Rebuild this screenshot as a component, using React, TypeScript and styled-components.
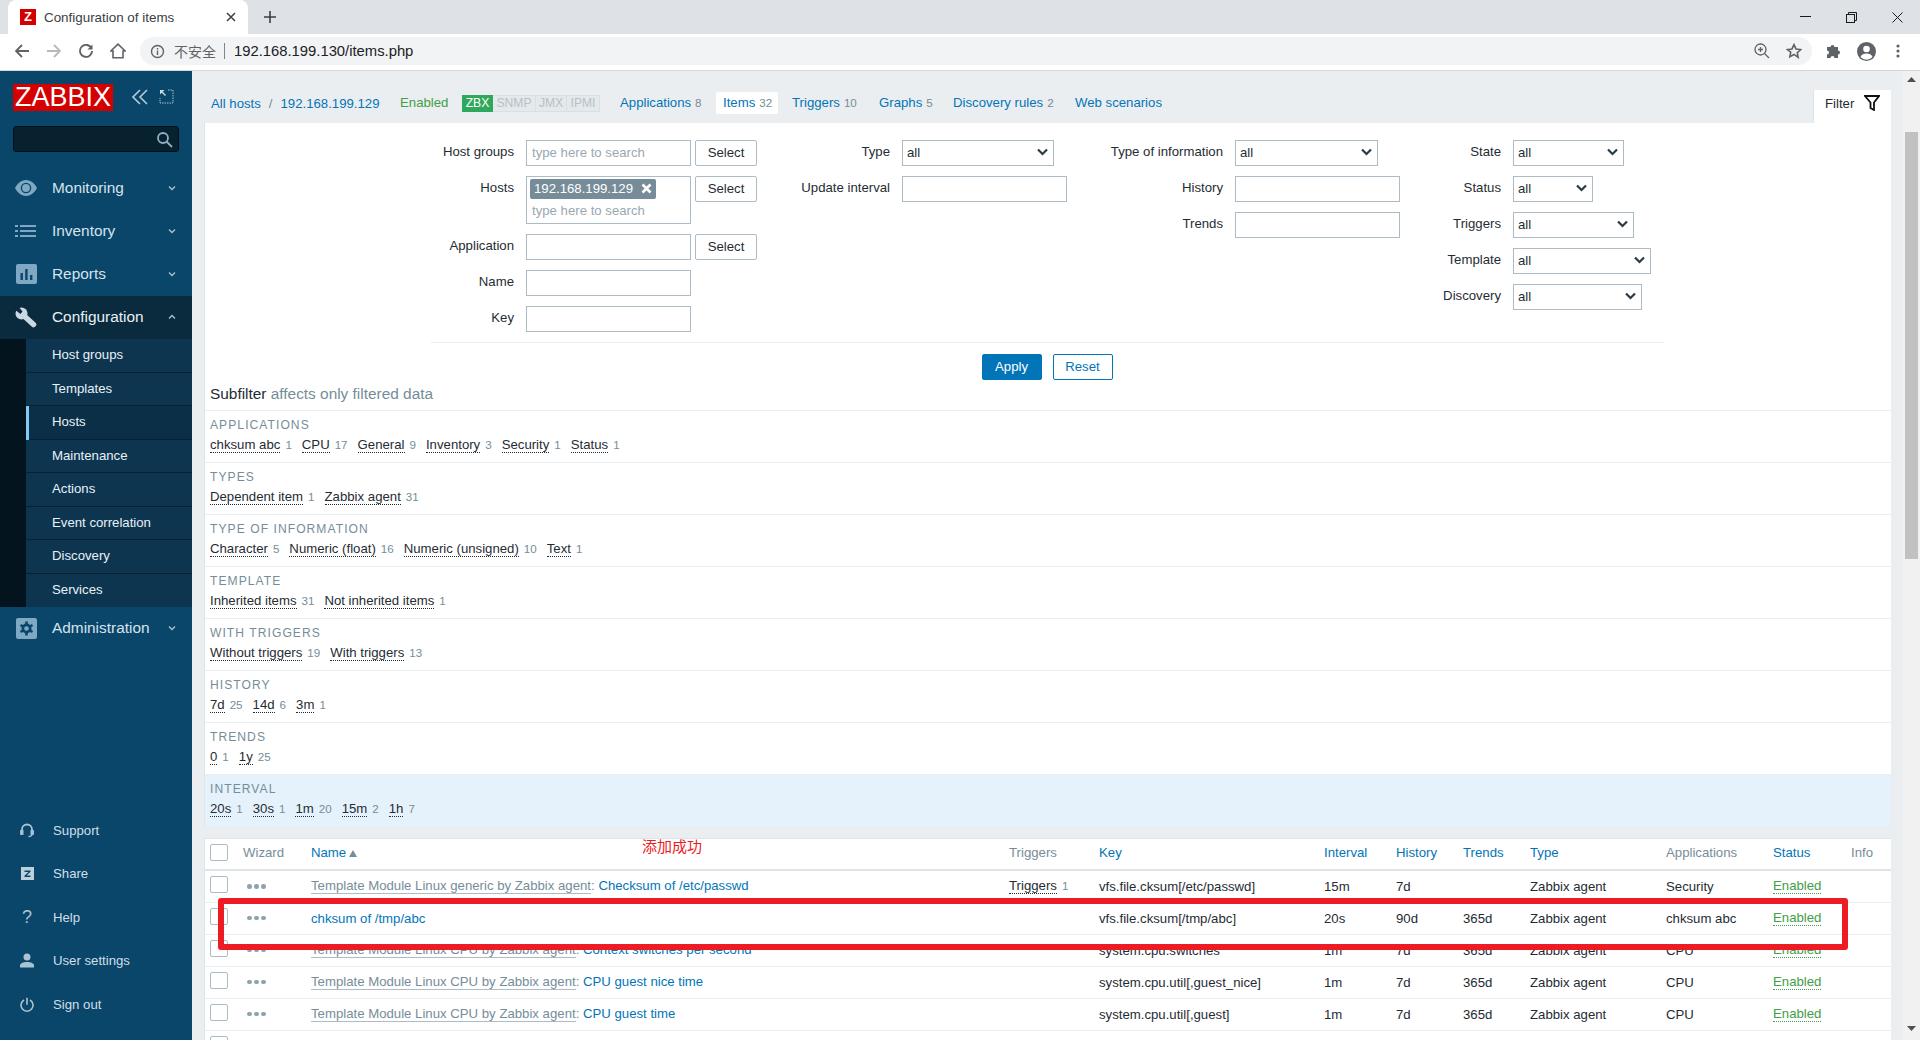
import React from 'react';
import styled, { createGlobalStyle } from 'styled-components';

const Global = createGlobalStyle`
  html, body { margin: 0; padding: 0; height: 100%; overflow: hidden; }
  body { font-family: "Liberation Sans", Arial, sans-serif; font-size: 13.2px; color: #1f2c33; }
  * { box-sizing: border-box; }
`;

const Page = styled.div`
  width: 1920px; height: 1040px; display: flex; flex-direction: column; overflow: hidden; background: #ebeef0;
`;

/* ---------- browser chrome ---------- */
const TabStrip = styled.div`
  height: 34px; background: #dee1e6; display: flex; align-items: stretch; padding-left: 8px; flex: none;
`;
const BrowserTab = styled.div`
  width: 240px; background: #fff; border-radius: 8px 8px 0 0; display: flex; align-items: center; padding: 0 12px;
  font-size: 13.4px; color: #3c4043;
`;
const Favicon = styled.span`
  width: 16px; height: 16px; background: #d40000; color: #fff; font-weight: 700; font-size: 13px; line-height: 16px;
  text-align: center; margin-right: 8px; flex: none;
`;
const TabTitle = styled.span` flex: 1; `;
const NewTab = styled.div`
  width: 44px; display: flex; align-items: center; justify-content: center;
`;
const WindowControls = styled.div`
  margin-left: auto; display: flex; align-items: center;
`;
const WinBtn = styled.div`
  width: 46px; height: 28px; display: flex; align-items: center; justify-content: center;
`;
const Toolbar = styled.div`
  height: 37px; background: #fff; border-bottom: 1px solid #d3d6da; display: flex; align-items: center; flex: none;
  padding: 0 0 2px 6px;
`;
const NavBtn = styled.div`
  width: 32px; height: 32px; display: flex; align-items: center; justify-content: center;
`;
const AddressBar = styled.div`
  margin-left: 6px; width: 1672px; height: 28px; border-radius: 14px; background: #f1f3f4; display: flex; align-items: center;
  padding: 0 10px 0 10px; color: #5f6368;
`;
const Insecure = styled.span`
  font-family: "Noto Sans CJK SC", "Liberation Sans", sans-serif; font-size: 14px; color: #5f6368; margin-left: 9px;
`;
const UrlSep = styled.span`
  width: 1px; height: 16px; background: #80868b; margin: 0 9px 0 8px;
`;
const Url = styled.span` font-size: 14.8px; color: #202124; `;
const Grow = styled.span` flex: 1; `;
const RightIcons = styled.div`
  display: flex; align-items: center; gap: 16px;
`;
const ProfileIcons = styled.div`
  display: flex; align-items: center; margin-left: 6px;
`;

/* ---------- layout ---------- */
const Body = styled.div`
  flex: 1; display: flex; min-height: 0;
`;
const Sidebar = styled.aside`
  width: 192px; flex: none; background: #0a466a; display: flex; flex-direction: column;
`;
const LogoRow = styled.div`
  height: 53px; padding: 13px 0 0 13px; display: flex; align-items: flex-start;
`;
const Logo = styled.div`
  width: 100px; height: 27px; background: #d40000; color: #fff; font-size: 27px; line-height: 27px; text-align: center;
  white-space: nowrap;
`;
const LogoIcons = styled.div`
  display: flex; gap: 11px; margin: 5px 0 0 19px;
`;
const SearchBox = styled.div`
  margin: 2px 13px 0; height: 26px; background: #07212f; border: 1px solid #031018; border-radius: 3px;
  display: flex; align-items: center; justify-content: flex-end; padding-right: 5px;
`;
const Menu = styled.nav` margin-top: 15px; `;
const MenuItem = styled.div<{ $open?: boolean }>`
  height: 43px; display: flex; align-items: center; padding: 0 16px 1px 15px;
  background: ${p => (p.$open ? '#0a2a3d' : 'transparent')};
  color: ${p => (p.$open ? '#e8f1f6' : '#d4e3ec')}; font-size: 15.4px;
`;
const MenuIcon = styled.span`
  width: 22px; height: 22px; display: flex; align-items: center; justify-content: center; margin-right: 15px; flex: none;
`;
const MenuLabel = styled.span` flex: 1; `;
const SubMenu = styled.div`
  border-left: 26px solid #03141e; background: #0e3550;
`;
const SubItem = styled.div<{ $active?: boolean }>`
  height: 33.5px; display: flex; align-items: center; font-size: 13.2px; color: #e8f1f6; padding-bottom: 2px;
  padding-left: ${p => (p.$active ? '23px' : '26px')};
  border-left: ${p => (p.$active ? '3px solid #82c9f7' : 'none')};
  background: ${p => (p.$active ? '#0a2f47' : 'transparent')};
  box-shadow: inset 0 -1px 0 #08202f;
  &:last-child { box-shadow: none; }
`;
const BottomMenu = styled.div`
  margin-top: auto; padding-bottom: 13px;
`;
const BottomItem = styled.div`
  height: 43.5px; display: flex; align-items: center; padding: 0 0 2px 19px; color: #d0dfe8; font-size: 13.2px;
`;
const BottomIcon = styled.span`
  width: 16px; height: 18px; display: flex; align-items: center; justify-content: center; margin-right: 18px;
  font-size: 18px; color: #a9c3d3;
`;

const Main = styled.main`
  flex: 1; min-width: 0; padding: 0 12px; overflow: hidden;
`;
const ScrollTrack = styled.div`
  width: 17px; flex: none; background: #f1f1f1; display: flex; flex-direction: column; align-items: center; padding-top: 6px;
`;
const ScrollThumb = styled.div`
  width: 13px; height: 427px; background: #c1c1c1; margin-top: 50px;
`;
const ScrollDown = styled.div` margin-top: auto; padding-bottom: 6px; `;

/* ---------- header ---------- */
const HeaderRow = styled.div`
  height: 52px; display: flex; align-items: flex-start; padding-left: 7px; color: #0275b8;
`;
const Crumbs = styled.div`
  display: flex; align-items: center; height: 22px; margin-top: 21px; width: 189px; white-space: nowrap;
`;
const CrumbSep = styled.span` color: #768d99; margin: 0 8px; `;
const StatusText = styled.span`
  color: #429e47; margin-top: 21px; line-height: 22px; width: 62px;
`;
const Badges = styled.div`
  display: flex; margin-top: 24px; width: 151px; height: 17px;
`;
const Badge = styled.span<{ $on?: boolean; $w: number }>`
  width: ${p => p.$w}px; height: 17px; text-align: center; font-size: 12.1px;
  background: ${p => (p.$on ? '#2fa85c' : '#e4e9ec')}; color: ${p => (p.$on ? '#fff' : '#b5c1c7')};
  border: ${p => (p.$on ? 'none' : '1px solid #d9dfe2')}; border-left: ${p => (p.$on ? 'none' : '0')};
  line-height: ${p => (p.$on ? '17px' : '15px')};
`;
const NavItem = styled.div<{ $on?: boolean; $w: number }>`
  width: ${p => p.$w}px; height: 22px; margin: 21px 7px 0 0; line-height: 22px; white-space: nowrap; padding-left: 7px;
  background: ${p => (p.$on ? '#fff' : 'transparent')}; border-radius: 2px;
`;
const NavCount = styled.span` color: #768d99; font-size: 11.6px; margin-left: 4px; `;
const FilterTab = styled.div`
  margin-left: auto; width: 78px; height: 33px; margin-top: 19px; background: #fff; display: flex; align-items: center;
  padding: 0 0 7px 11px; gap: 10px; color: #1f2c33; border-radius: 2px 2px 0 0; border-left: 1px solid #dfe4e7;
`;

/* ---------- filter ---------- */
const Panel = styled.section`
  background: #fff; border-left: 1px solid #dfe4e7;
`;
const FilterGrid = styled.div`
  display: grid; grid-template-columns: 555px 323px 328px 1fr; padding: 17px 0 10px;
`;
const FilterCol = styled.div`
  display: flex; flex-direction: column; gap: 10px;
`;
const FormRow = styled.div<{ $labelW: number }>`
  display: grid; grid-template-columns: ${p => p.$labelW}px auto; column-gap: 12px; justify-content: start; align-items: start;
`;
const Label = styled.label`
  text-align: right; line-height: 24px; white-space: nowrap;
`;
const Fields = styled.div` display: flex; gap: 4px; align-items: flex-start; `;
const Input = styled.input<{ $w: number }>`
  width: ${p => p.$w}px; height: 26px; border: 1px solid #acbbc4; padding: 0 5px 2px; font: inherit; background: #fff; outline: none;
  border-radius: 0; display: block;
  &::placeholder { color: #9aa8b1; opacity: 1; }
`;
const HostBox = styled.div`
  width: 165px; height: 48px; border: 1px solid #acbbc4; padding: 2px 3px;
`;
const HostChip = styled.div`
  width: 126px; height: 20px; background: #768d99; color: #fff; border-radius: 2px; display: flex; align-items: center;
  justify-content: space-between; padding: 0 4px 2px;
`;
const HostSearch = styled.input`
  width: 100%; height: 20px; border: none; outline: none; padding: 0 2px 2px; font: inherit; margin-top: 2px;
  &::placeholder { color: #9aa8b1; opacity: 1; }
`;
const SelectBtn = styled.button`
  width: 62px; height: 26px; background: #fff; border: 1px solid #acbbc4; border-radius: 2px; font: inherit; color: #1f2c33; padding: 0 0 2px;
`;
const SelectBox = styled.div<{ $w: number }>`
  width: ${p => p.$w}px; height: 26px; border: 1px solid #acbbc4; display: flex; align-items: center; justify-content: space-between;
  padding: 0 5px 2px 4px; background: #fff;
`;
const Divider = styled.hr`
  border: none; height: 1px; background: #ebeef0; margin: 0 227px 0 226px;
`;
const Actions = styled.div`
  display: flex; justify-content: center; gap: 11px; padding: 11px 2px 0 0;
`;
const ActionBtn = styled.button<{ $primary?: boolean }>`
  width: 60px; height: 26px; font: inherit; border-radius: 2px; border: 1px solid #0275b8; padding: 0 0 2px;
  background: ${p => (p.$primary ? '#0275b8' : '#fff')}; color: ${p => (p.$primary ? '#fff' : '#0275b8')};
`;
const SubTitle = styled.div`
  height: 30px; line-height: 28px; padding-left: 5px; font-size: 15.4px; color: #1f2c33;
`;
const SubNote = styled.span` color: #768d99; `;
const SubSection = styled.div<{ $hl?: boolean }>`
  height: 52px; border-top: 1px solid #ebeef0; padding: 6px 0 0 5px; background: ${p => (p.$hl ? '#e5f2fc' : 'transparent')};
`;
const SubHead = styled.div`
  font-size: 12.1px; letter-spacing: 1.05px; color: #768d99; line-height: 16px; text-transform: uppercase;
`;
const SubValues = styled.div`
  display: flex; gap: 10px; margin-top: 4px; line-height: 16px;
`;
const Dotted = styled.span`
  color: #1f2c33; border-bottom: 1px dotted #1f2c33; line-height: 15px; display: inline-block;
`;
const Count = styled.span`
  color: #768d99; font-size: 11.6px; margin-left: 5px;
`;

/* ---------- table ---------- */
const TablePanel = styled.section`
  position: relative; margin-top: 12px; background: #fff; border-top: 1px solid #dfe4e7; border-left: 1px solid #dfe4e7;
`;
const Table = styled.table`
  width: 100%; table-layout: fixed; border-collapse: collapse;
`;
const Check = styled.span`
  display: block; width: 18px; height: 17px; border: 1px solid #acbbc4; border-radius: 2px; background: #fff;
`;
const Th = styled.th<{ $link?: boolean }>`
  height: 31px; text-align: left; font-weight: 400; padding: 0 0 4px; border-bottom: 2px solid #dde3e6; white-space: nowrap;
  color: ${p => (p.$link ? '#0275b8' : '#768d99')};
  &:first-child { padding-left: 5px; }
`;
const Td = styled.td`
  height: 32px; padding: 0; border-bottom: 1px solid #ebeef0; white-space: nowrap;
  &:first-child { padding-left: 5px; }
  ${Check} { margin-bottom: 4px; }
`;
const Dots = styled.span`
  display: flex; gap: 2.5px; margin-left: 4px;
  i { width: 4.5px; height: 4.5px; border-radius: 50%; background: #8fa2ad; display: block; }
`;
const TemplateLink = styled.span`
  color: #768d99; border-bottom: 1px solid #acbbc4; display: inline-block; line-height: 15px;
`;
const Colon = styled.span` color: #768d99; `;
const ItemLink = styled.span` color: #0275b8; `;
const Enabled = styled.span`
  color: #429e47; border-bottom: 1px dotted #429e47; display: inline-block; line-height: 15px;
`;
const SortMark = styled.span`
  display: inline-block; margin-left: 3px; width: 0; height: 0; border-left: 4.5px solid transparent; border-right: 4.5px solid transparent;
  border-bottom: 7px solid #768d99;
`;
const Annotation = styled.div`
  position: absolute; left: 437px; top: -1px; color: #ed1c24; font-size: 15px; line-height: 16px;
  font-family: "Noto Sans CJK SC", sans-serif;
`;
const RedBox = styled.div`
  position: absolute; left: 13px; top: 59px; width: 1630px; height: 52px; border: 6px solid #ed1c24; border-radius: 3px; pointer-events: none;
`;

/* ---------- icons ---------- */
const ICON = '#7fa8c2';
const Chevron = ({ up }: { up?: boolean }) => (
  <svg width="8" height="6" viewBox="0 0 8 6" fill="none" stroke="#a9c3d3" strokeWidth="1.3">
    <path d={up ? 'M1 4.5 4 1.5 7 4.5' : 'M1 1.5 4 4.5 7 1.5'} />
  </svg>
);
const SelectChevron = () => (
  <svg width="11" height="8" viewBox="0 0 11 8" fill="none" stroke="#2b3a43" strokeWidth="2.2">
    <path d="M1 1.5 5.5 6 10 1.5" />
  </svg>
);
const EyeIcon = () => (
  <svg width="25" height="18" viewBox="0 0 25 18">
    <path fill={ICON} d="M12.5 0C6.5 0 2.500 4.500 0 9c2.500 4.500 6.500 9 12.500 9s10-4.500 12.500-9C22.500 4.500 18.500 0 12.500 0z" />
    <circle cx="12.5" cy="9" r="6" fill="#0a466a" />
    <circle cx="12.5" cy="9" r="4.5" fill={ICON} />
  </svg>
);
const ListIcon = () => (
  <svg width="22" height="14" viewBox="0 0 22 14" fill={ICON}>
    <rect x="0" y="1" width="3" height="2" /><rect x="5" y="1" width="16" height="2" />
    <rect x="0" y="6" width="3" height="2" /><rect x="5" y="6" width="16" height="2" />
    <rect x="0" y="11" width="3" height="2" /><rect x="5" y="11" width="16" height="2" />
  </svg>
);
const ReportIcon = () => (
  <svg width="21" height="20" viewBox="0 0 21 20">
    <rect width="21" height="20" rx="2" fill={ICON} />
    <rect x="4.5" y="9" width="2.4" height="7" fill="#0a466a" />
    <rect x="9.2" y="5" width="2.4" height="11" fill="#0a466a" />
    <rect x="14" y="11" width="2.4" height="5" fill="#0a466a" />
  </svg>
);
const WrenchIcon = () => (
  <svg width="22" height="21" viewBox="0 0 22 21">
    <path d="M7 7 18.500 17.500" stroke="#c9d9e3" strokeWidth="5.500" strokeLinecap="round" />
    <circle cx="6.500" cy="6.500" r="6" fill="#c9d9e3" />
    <path d="M-1 2 5.500 7 7.500 4.500 3-1z" fill="#0a2a3d" />
  </svg>
);
const GearIcon = () => (
  <svg width="21" height="21" viewBox="0 0 21 21">
    <rect width="21" height="21" rx="2" fill={ICON} />
    <circle cx="10.500" cy="10.500" r="5" fill="#0a466a" />
    <g stroke="#0a466a" strokeWidth="2.600">
      <path d="M10.500 3.500v3M10.500 14.500v3M4.500 7l2.500 1.500M14 12.500 16.500 14M4.500 14l2.500-1.500M14 8.500 16.500 7" />
    </g>
    <circle cx="10.500" cy="10.500" r="2.300" fill={ICON} />
  </svg>
);
const B = '#a9c3d3';
const HeadsetIcon = () => (
  <svg width="14" height="15" viewBox="0 0 14 15" fill="none" stroke={B} strokeWidth="1.800">
    <path d="M2 9V6.500a5 5 0 0 1 10 0V9" />
    <rect x="1" y="8" width="1.600" height="3" fill={B} /><rect x="11.400" y="8" width="1.600" height="3" fill={B} />
    <path d="M12 11c0 1.800-1.500 2.500-3.500 2.500" strokeWidth="1.300" />
  </svg>
);
const ShareIcon = () => (
  <svg width="13" height="13" viewBox="0 0 13 13">
    <rect width="13" height="13" fill="#bcd0dc" />
    <path d="M3.500 3.500h6v1.300L5.600 8.500h3.900v1.500h-6V8.700l3.900-3.700H3.500z" fill="#0a466a" />
  </svg>
);
const UserIcon = () => (
  <svg width="14" height="15" viewBox="0 0 14 15" fill={B}>
    <circle cx="7" cy="4" r="3.500" /><path d="M0 14.500v-2c0-2 3-3.500 7-3.500s7 1.500 7 3.500v2z" />
  </svg>
);
const PowerIcon = () => (
  <svg width="14" height="15" viewBox="0 0 14 15" fill="none" stroke={B} strokeWidth="1.600">
    <path d="M7 .8v7M4 3a6 6 0 1 0 6 0" />
  </svg>
);
const FunnelIcon = () => (
  <svg width="16" height="16" viewBox="0 0 16 16" fill="none" stroke="#111" strokeWidth="1.800">
    <path d="M1 1h14L10 7.500V15L6.500 13V7.500z" />
  </svg>
);
const G = '#5f6368';

const sections: { head: string; hl?: boolean; items: [string, string][] }[] = [
  { head: 'Applications', items: [['chksum abc', '1'], ['CPU', '17'], ['General', '9'], ['Inventory', '3'], ['Security', '1'], ['Status', '1']] },
  { head: 'Types', items: [['Dependent item', '1'], ['Zabbix agent', '31']] },
  { head: 'Type of information', items: [['Character', '5'], ['Numeric (float)', '16'], ['Numeric (unsigned)', '10'], ['Text', '1']] },
  { head: 'Template', items: [['Inherited items', '31'], ['Not inherited items', '1']] },
  { head: 'With triggers', items: [['Without triggers', '19'], ['With triggers', '13']] },
  { head: 'History', items: [['7d', '25'], ['14d', '6'], ['3m', '1']] },
  { head: 'Trends', items: [['0', '1'], ['1y', '25']] },
  { head: 'Interval', hl: true, items: [['20s', '1'], ['30s', '1'], ['1m', '20'], ['15m', '2'], ['1h', '7']] },
];

const rows = [
  { tpl: 'Template Module Linux generic by Zabbix agent', name: 'Checksum of /etc/passwd', trig: true, key: 'vfs.file.cksum[/etc/passwd]', iv: '15m', hi: '7d', tr: '', app: 'Security' },
  { tpl: '', name: 'chksum of /tmp/abc', trig: false, key: 'vfs.file.cksum[/tmp/abc]', iv: '20s', hi: '90d', tr: '365d', app: 'chksum abc' },
  { tpl: 'Template Module Linux CPU by Zabbix agent', name: 'Context switches per second', trig: false, key: 'system.cpu.switches', iv: '1m', hi: '7d', tr: '365d', app: 'CPU' },
  { tpl: 'Template Module Linux CPU by Zabbix agent', name: 'CPU guest nice time', trig: false, key: 'system.cpu.util[,guest_nice]', iv: '1m', hi: '7d', tr: '365d', app: 'CPU' },
  { tpl: 'Template Module Linux CPU by Zabbix agent', name: 'CPU guest time', trig: false, key: 'system.cpu.util[,guest]', iv: '1m', hi: '7d', tr: '365d', app: 'CPU' },
];

const colWidths = [38, 68, 698, 90, 225, 72, 67, 67, 136, 107, 78, 40];

const subItems = ['Host groups', 'Templates', 'Hosts', 'Maintenance', 'Actions', 'Event correlation', 'Discovery', 'Services'];

export default function App() {
  return (
    <Page>
      <Global />
      <TabStrip>
        <BrowserTab>
          <Favicon>Z</Favicon>
          <TabTitle>Configuration of items</TabTitle>
          <svg width="10" height="10" viewBox="0 0 10 10" stroke="#3c4043" strokeWidth="1.500"><path d="M1 1l8 8M9 1l-8 8" /></svg>
        </BrowserTab>
        <NewTab>
          <svg width="12" height="12" viewBox="0 0 12 12" stroke="#3c4043" strokeWidth="1.600"><path d="M6 0v12M0 6h12" /></svg>
        </NewTab>
        <WindowControls>
          <WinBtn><svg width="11" height="2" viewBox="0 0 11 2"><rect width="11" height="1" fill="#1a1a1a" /></svg></WinBtn>
          <WinBtn><svg width="11" height="11" viewBox="0 0 11 11" fill="none" stroke="#1a1a1a"><rect x=".5" y="2.500" width="8" height="8" /><path d="M2.500 2.500v-2h8v8h-2" /></svg></WinBtn>
          <WinBtn><svg width="11" height="11" viewBox="0 0 11 11" stroke="#1a1a1a"><path d="M.5.5l10 10M10.500.5l-10 10" /></svg></WinBtn>
        </WindowControls>
      </TabStrip>
      <Toolbar>
        <NavBtn><svg width="14" height="14" viewBox="0 0 14 14" fill="none" stroke={G} strokeWidth="1.800"><path d="M14 7H1.500M7 1 1 7l6 6" /></svg></NavBtn>
        <NavBtn><svg width="14" height="14" viewBox="0 0 14 14" fill="none" stroke="#b6b9bd" strokeWidth="1.800"><path d="M0 7h12.500M7 1l6 6-6 6" /></svg></NavBtn>
        <NavBtn><svg width="14" height="14" viewBox="0 0 14 14" fill="none" stroke={G} strokeWidth="1.800"><path d="M12.500 4.500A6 6 0 1 0 13 7" /><path d="M13.500 .5v5h-5z" fill={G} stroke="none" /></svg></NavBtn>
        <NavBtn><svg width="16" height="16" viewBox="0 0 16 16" fill="none" stroke={G} strokeWidth="1.600"><path d="M8 1.200.8 8H3v6.800h10V8h2.200z" /></svg></NavBtn>
        <AddressBar>
          <svg width="15" height="15" viewBox="0 0 15 15" fill="none" stroke={G} strokeWidth="1.400"><circle cx="7.500" cy="7.500" r="6" /><path d="M7.500 6.500v4.500M7.500 4v1.500" /></svg>
          <Insecure>不安全</Insecure>
          <UrlSep />
          <Url>192.168.199.130/items.php</Url>
          <Grow />
          <RightIcons>
            <svg width="16" height="16" viewBox="0 0 16 16" fill="none" stroke={G} strokeWidth="1.300"><circle cx="6.500" cy="6.500" r="5.500" /><path d="M10.500 10.500 15 15M4 6.500h5M6.500 4v5" /></svg>
            <svg width="16" height="16" viewBox="0 0 24 24" fill="none" stroke={G} strokeWidth="2.400"><path d="M12 2.500l3 6.400 7 .9-5.100 4.800 1.300 6.900L12 17.200 5.800 20.500l1.300-6.900L2 9.800l7-.9z" /></svg>
          </RightIcons>
        </AddressBar>
        <ProfileIcons>
          <NavBtn><svg width="16" height="16" viewBox="0 0 16 16" fill={G}><path d="M1 4h3.500a2 2 0 1 1 4 0H12v3.500a2 2 0 1 1 0 4V15H8.500a2 2 0 1 0-4 0H1v-3.500a2 2 0 1 0 0-4z" /></svg></NavBtn>
          <NavBtn><svg width="19" height="19" viewBox="0 0 19 19"><circle cx="9.500" cy="9.500" r="9.500" fill={G} /><circle cx="9.500" cy="7" r="3.300" fill="#fff" /><path d="M3.500 15c1-2.600 3.500-3.500 6-3.500s5 .9 6 3.500a8 8 0 0 1-12 0z" fill="#fff" /></svg></NavBtn>
          <NavBtn><svg width="4" height="14" viewBox="0 0 4 14" fill={G}><circle cx="2" cy="2" r="1.600" /><circle cx="2" cy="7" r="1.600" /><circle cx="2" cy="12" r="1.600" /></svg></NavBtn>
        </ProfileIcons>
      </Toolbar>

      <Body>
        <Sidebar>
          <LogoRow>
            <Logo>ZABBIX</Logo>
            <LogoIcons>
              <svg width="16" height="16" viewBox="0 0 16 16" fill="none" stroke="#b3cbd9" strokeWidth="1.600"><path d="M8 1 1 8l7 7M15 1 8 8l7 7" /></svg>
              <svg width="15" height="15" viewBox="0 0 15 15" fill="none" stroke="#a9c3d3"><path d="M9 1h5v13H1V9" strokeDasharray="1.500 1" /><path d="M1 1h4.500L3.800 2.700 7 6 6 7 2.800 3.800 1 5.500z" fill="#c9d9e3" stroke="none" /></svg>
            </LogoIcons>
          </LogoRow>
          <SearchBox>
            <svg width="17" height="17" viewBox="0 0 17 17" fill="none" stroke="#8fb0c4" strokeWidth="1.800"><circle cx="7" cy="7" r="5" /><path d="m10.500 10.500 5.500 5.500" /></svg>
          </SearchBox>
          <Menu>
            <MenuItem><MenuIcon><EyeIcon /></MenuIcon><MenuLabel>Monitoring</MenuLabel><Chevron /></MenuItem>
            <MenuItem><MenuIcon><ListIcon /></MenuIcon><MenuLabel>Inventory</MenuLabel><Chevron /></MenuItem>
            <MenuItem><MenuIcon><ReportIcon /></MenuIcon><MenuLabel>Reports</MenuLabel><Chevron /></MenuItem>
            <MenuItem $open><MenuIcon><WrenchIcon /></MenuIcon><MenuLabel>Configuration</MenuLabel><Chevron up /></MenuItem>
            <SubMenu>
              {subItems.map(s => <SubItem key={s} $active={s === 'Hosts'}>{s}</SubItem>)}
            </SubMenu>
            <MenuItem><MenuIcon><GearIcon /></MenuIcon><MenuLabel>Administration</MenuLabel><Chevron /></MenuItem>
          </Menu>
          <BottomMenu>
            <BottomItem><BottomIcon><HeadsetIcon /></BottomIcon>Support</BottomItem>
            <BottomItem><BottomIcon><ShareIcon /></BottomIcon>Share</BottomItem>
            <BottomItem><BottomIcon>?</BottomIcon>Help</BottomItem>
            <BottomItem><BottomIcon><UserIcon /></BottomIcon>User settings</BottomItem>
            <BottomItem><BottomIcon><PowerIcon /></BottomIcon>Sign out</BottomItem>
          </BottomMenu>
        </Sidebar>

        <Main>
          <HeaderRow>
            <Crumbs>All hosts<CrumbSep>/</CrumbSep>192.168.199.129</Crumbs>
            <StatusText>Enabled</StatusText>
            <Badges>
              <Badge $on $w={31}>ZBX</Badge>
              <Badge $w={43}>SNMP</Badge>
              <Badge $w={31}>JMX</Badge>
              <Badge $w={33}>IPMI</Badge>
            </Badges>
            <NavItem $w={96}>Applications<NavCount>8</NavCount></NavItem>
            <NavItem $on $w={62}>Items<NavCount>32</NavCount></NavItem>
            <NavItem $w={80}>Triggers<NavCount>10</NavCount></NavItem>
            <NavItem $w={67}>Graphs<NavCount>5</NavCount></NavItem>
            <NavItem $w={115}>Discovery rules<NavCount>2</NavCount></NavItem>
            <NavItem $w={110}>Web scenarios</NavItem>
            <FilterTab>Filter<FunnelIcon /></FilterTab>
          </HeaderRow>

          <Panel>
            <FilterGrid>
              <FilterCol>
                <FormRow $labelW={309}><Label>Host groups</Label><Fields><Input $w={165} placeholder="type here to search" /><SelectBtn>Select</SelectBtn></Fields></FormRow>
                <FormRow $labelW={309}><Label>Hosts</Label><Fields>
                  <HostBox>
                    <HostChip>192.168.199.129
                      <svg width="11" height="11" viewBox="0 0 11 11" stroke="#fff" strokeWidth="2.600"><path d="M1.500 1.500l8 8M9.500 1.500l-8 8" /></svg>
                    </HostChip>
                    <HostSearch placeholder="type here to search" />
                  </HostBox>
                  <SelectBtn>Select</SelectBtn></Fields></FormRow>
                <FormRow $labelW={309}><Label>Application</Label><Fields><Input $w={165} /><SelectBtn>Select</SelectBtn></Fields></FormRow>
                <FormRow $labelW={309}><Label>Name</Label><Fields><Input $w={165} /></Fields></FormRow>
                <FormRow $labelW={309}><Label>Key</Label><Fields><Input $w={165} /></Fields></FormRow>
              </FilterCol>
              <FilterCol>
                <FormRow $labelW={130}><Label>Type</Label><SelectBox $w={152}>all<SelectChevron /></SelectBox></FormRow>
                <FormRow $labelW={130}><Label>Update interval</Label><Input $w={165} /></FormRow>
              </FilterCol>
              <FilterCol>
                <FormRow $labelW={140}><Label>Type of information</Label><SelectBox $w={143}>all<SelectChevron /></SelectBox></FormRow>
                <FormRow $labelW={140}><Label>History</Label><Input $w={165} /></FormRow>
                <FormRow $labelW={140}><Label>Trends</Label><Input $w={165} /></FormRow>
              </FilterCol>
              <FilterCol>
                <FormRow $labelW={90}><Label>State</Label><SelectBox $w={111}>all<SelectChevron /></SelectBox></FormRow>
                <FormRow $labelW={90}><Label>Status</Label><SelectBox $w={80}>all<SelectChevron /></SelectBox></FormRow>
                <FormRow $labelW={90}><Label>Triggers</Label><SelectBox $w={121}>all<SelectChevron /></SelectBox></FormRow>
                <FormRow $labelW={90}><Label>Template</Label><SelectBox $w={138}>all<SelectChevron /></SelectBox></FormRow>
                <FormRow $labelW={90}><Label>Discovery</Label><SelectBox $w={129}>all<SelectChevron /></SelectBox></FormRow>
              </FilterCol>
            </FilterGrid>
            <Divider />
            <Actions>
              <ActionBtn $primary>Apply</ActionBtn>
              <ActionBtn>Reset</ActionBtn>
            </Actions>
            <SubTitle>Subfilter <SubNote>affects only filtered data</SubNote></SubTitle>
            {sections.map(s => (
              <SubSection key={s.head} $hl={s.hl}>
                <SubHead>{s.head}</SubHead>
                <SubValues>
                  {s.items.map(([label, n]) => (
                    <span key={label}><Dotted>{label}</Dotted><Count>{n}</Count></span>
                  ))}
                </SubValues>
              </SubSection>
            ))}
          </Panel>

          <TablePanel>
            <Table>
              <colgroup>{colWidths.map((w, i) => <col key={i} width={w} />)}</colgroup>
              <thead>
                <tr>
                  <Th><Check /></Th>
                  <Th>Wizard</Th>
                  <Th $link>Name<SortMark /></Th>
                  <Th>Triggers</Th>
                  <Th $link>Key</Th>
                  <Th $link>Interval</Th>
                  <Th $link>History</Th>
                  <Th $link>Trends</Th>
                  <Th $link>Type</Th>
                  <Th>Applications</Th>
                  <Th $link>Status</Th>
                  <Th>Info</Th>
                </tr>
              </thead>
              <tbody>
                {rows.map(r => (
                  <tr key={r.key}>
                    <Td><Check /></Td>
                    <Td><Dots><i /><i /><i /></Dots></Td>
                    <Td>
                      {r.tpl && <><TemplateLink>{r.tpl}</TemplateLink><Colon>: </Colon></>}
                      <ItemLink>{r.name}</ItemLink>
                    </Td>
                    <Td>{r.trig && <><Dotted>Triggers</Dotted><Count>1</Count></>}</Td>
                    <Td>{r.key}</Td>
                    <Td>{r.iv}</Td>
                    <Td>{r.hi}</Td>
                    <Td>{r.tr}</Td>
                    <Td>Zabbix agent</Td>
                    <Td>{r.app}</Td>
                    <Td><Enabled>Enabled</Enabled></Td>
                    <Td />
                  </tr>
                ))}
                <tr><Td><Check /></Td><Td colSpan={11} /></tr>
              </tbody>
            </Table>
            <Annotation>添加成功</Annotation>
            <RedBox />
          </TablePanel>
        </Main>

        <ScrollTrack>
          <svg width="9" height="5" viewBox="0 0 9 5" fill="#505050"><path d="M4.500 0 9 5H0z" /></svg>
          <ScrollThumb />
          <ScrollDown><svg width="9" height="5" viewBox="0 0 9 5" fill="#505050"><path d="M4.500 5 9 0H0z" /></svg></ScrollDown>
        </ScrollTrack>
      </Body>
    </Page>
  );
}
